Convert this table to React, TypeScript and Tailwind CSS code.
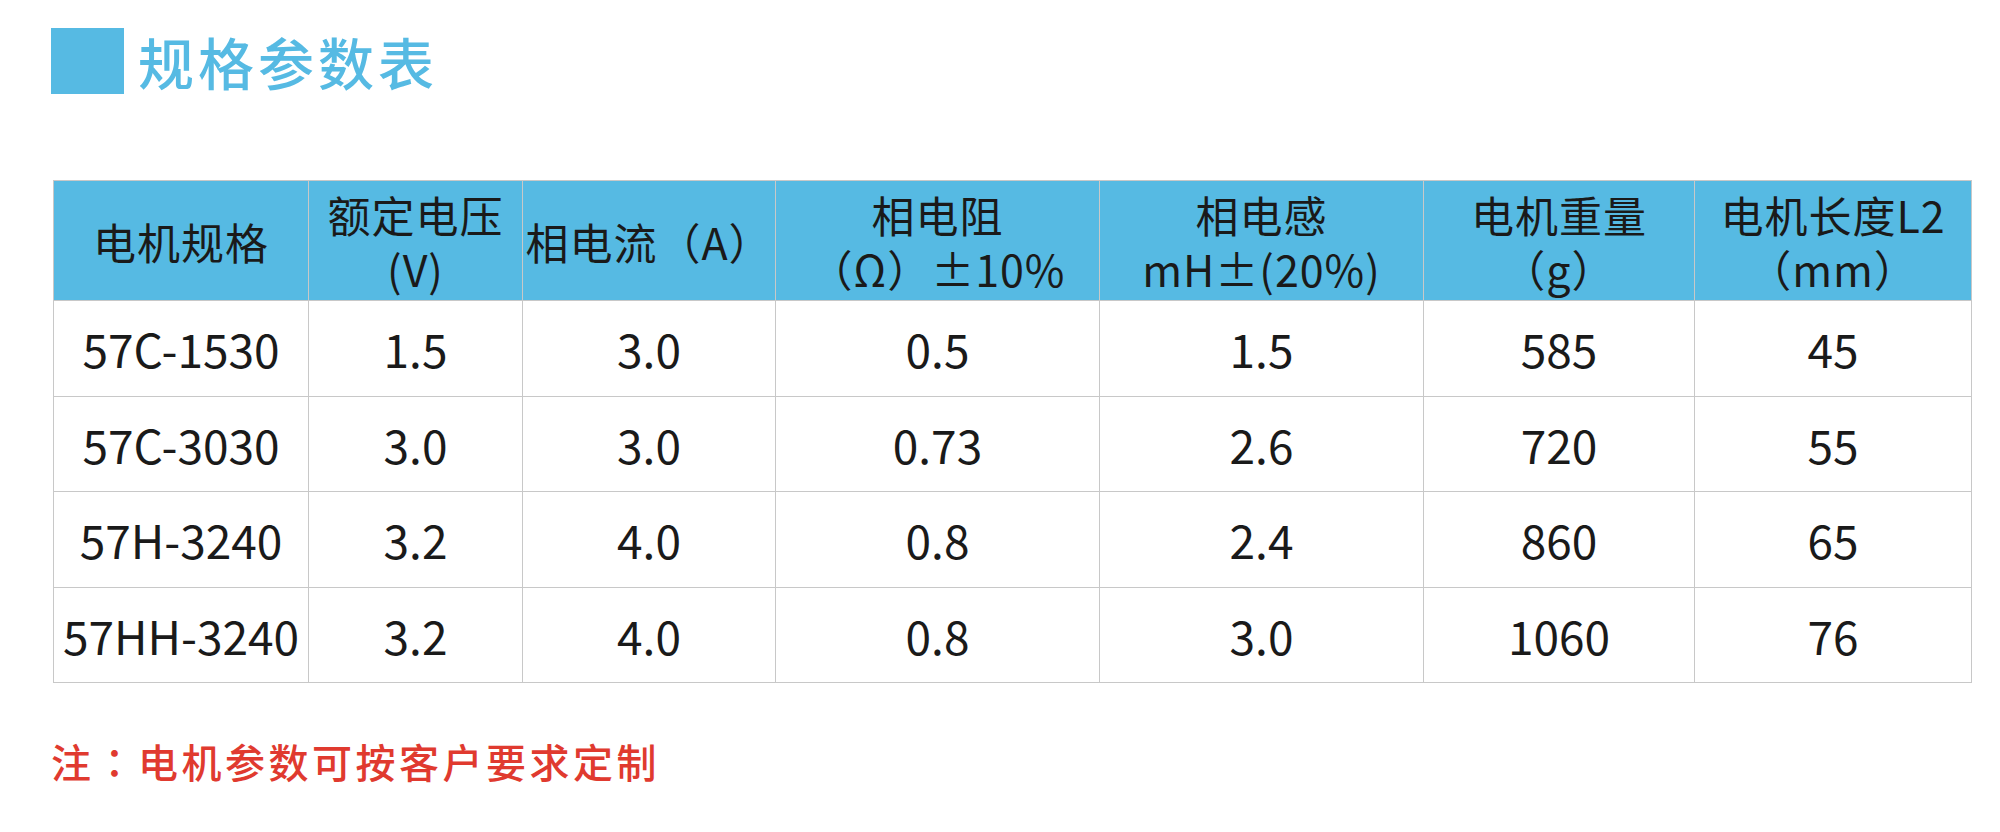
const FONT = "font-['Noto_Sans_CJK_SC','Noto_Sans',sans-serif]";

const colWidths = ['w-[255px]', 'w-[214px]', 'w-[253px]', 'w-[324px]', 'w-[324px]', 'w-[271px]', 'w-[277px]'];

const header: string[][] = [
  ['电机规格'],
  ['额定电压', '(V)'],
  ['相电流（A）'],
  ['相电阻', '（Ω）±10%'],
  ['相电感', 'mH±(20%)'],
  ['电机重量', '（g）'],
  ['电机长度L2', '（mm）'],
];

const rows: string[][] = [
  ['57C-1530', '1.5', '3.0', '0.5', '1.5', '585', '45'],
  ['57C-3030', '3.0', '3.0', '0.73', '2.6', '720', '55'],
  ['57H-3240', '3.2', '4.0', '0.8', '2.4', '860', '65'],
  ['57HH-3240', '3.2', '4.0', '0.8', '3.0', '1060', '76'],
];

export default function App() {
  return (
    <div className={`w-[2000px] h-[832px] bg-white pl-[51px] pt-[28px] ${FONT}`}>
      {/* title */}
      <div className="flex items-center">
        <div className="w-[73px] h-[66px] bg-[#56bae3]" />
        <h1 className="ml-[14px] text-[56px] font-medium leading-[66px] tracking-[4px] text-[#56bae3]">规格参数表</h1>
      </div>

      {/* spec table */}
      <table className="mt-[86px] ml-[2px] w-[1918px] table-fixed border-collapse text-[#1a1a1a]">
        <colgroup>
          {colWidths.map((w, i) => (
            <col key={i} className={w} />
          ))}
        </colgroup>
        <thead>
          <tr className="h-[120px] bg-[#56bae3]">
            {header.map((lines, i) => (
              <th key={i} className="border-[1.5px] border-[#c8c8c8] p-0 font-normal text-[43px] leading-[54px] tracking-[1px]">
                {lines.map((l) => (
                  <div key={l} className="whitespace-pre">{l}</div>
                ))}
              </th>
            ))}
          </tr>
        </thead>
        <tbody>
          {rows.map((r) => (
            <tr key={r[0]} className="h-[95.5px]">
              {r.map((v, i) => (
                <td key={i} className="border-[1.5px] border-[#c8c8c8] p-0 text-center text-[46px] leading-none">
                  {v}
                </td>
              ))}
            </tr>
          ))}
        </tbody>
      </table>

      <p className="mt-[56px] text-[40px] font-medium leading-[44px] tracking-[3.5px] text-[#e03a2f]">
        注<span className="font-['Noto_Sans_CJK_TC',sans-serif]">：</span>电机参数可按客户要求定制
      </p>
    </div>
  );
}
